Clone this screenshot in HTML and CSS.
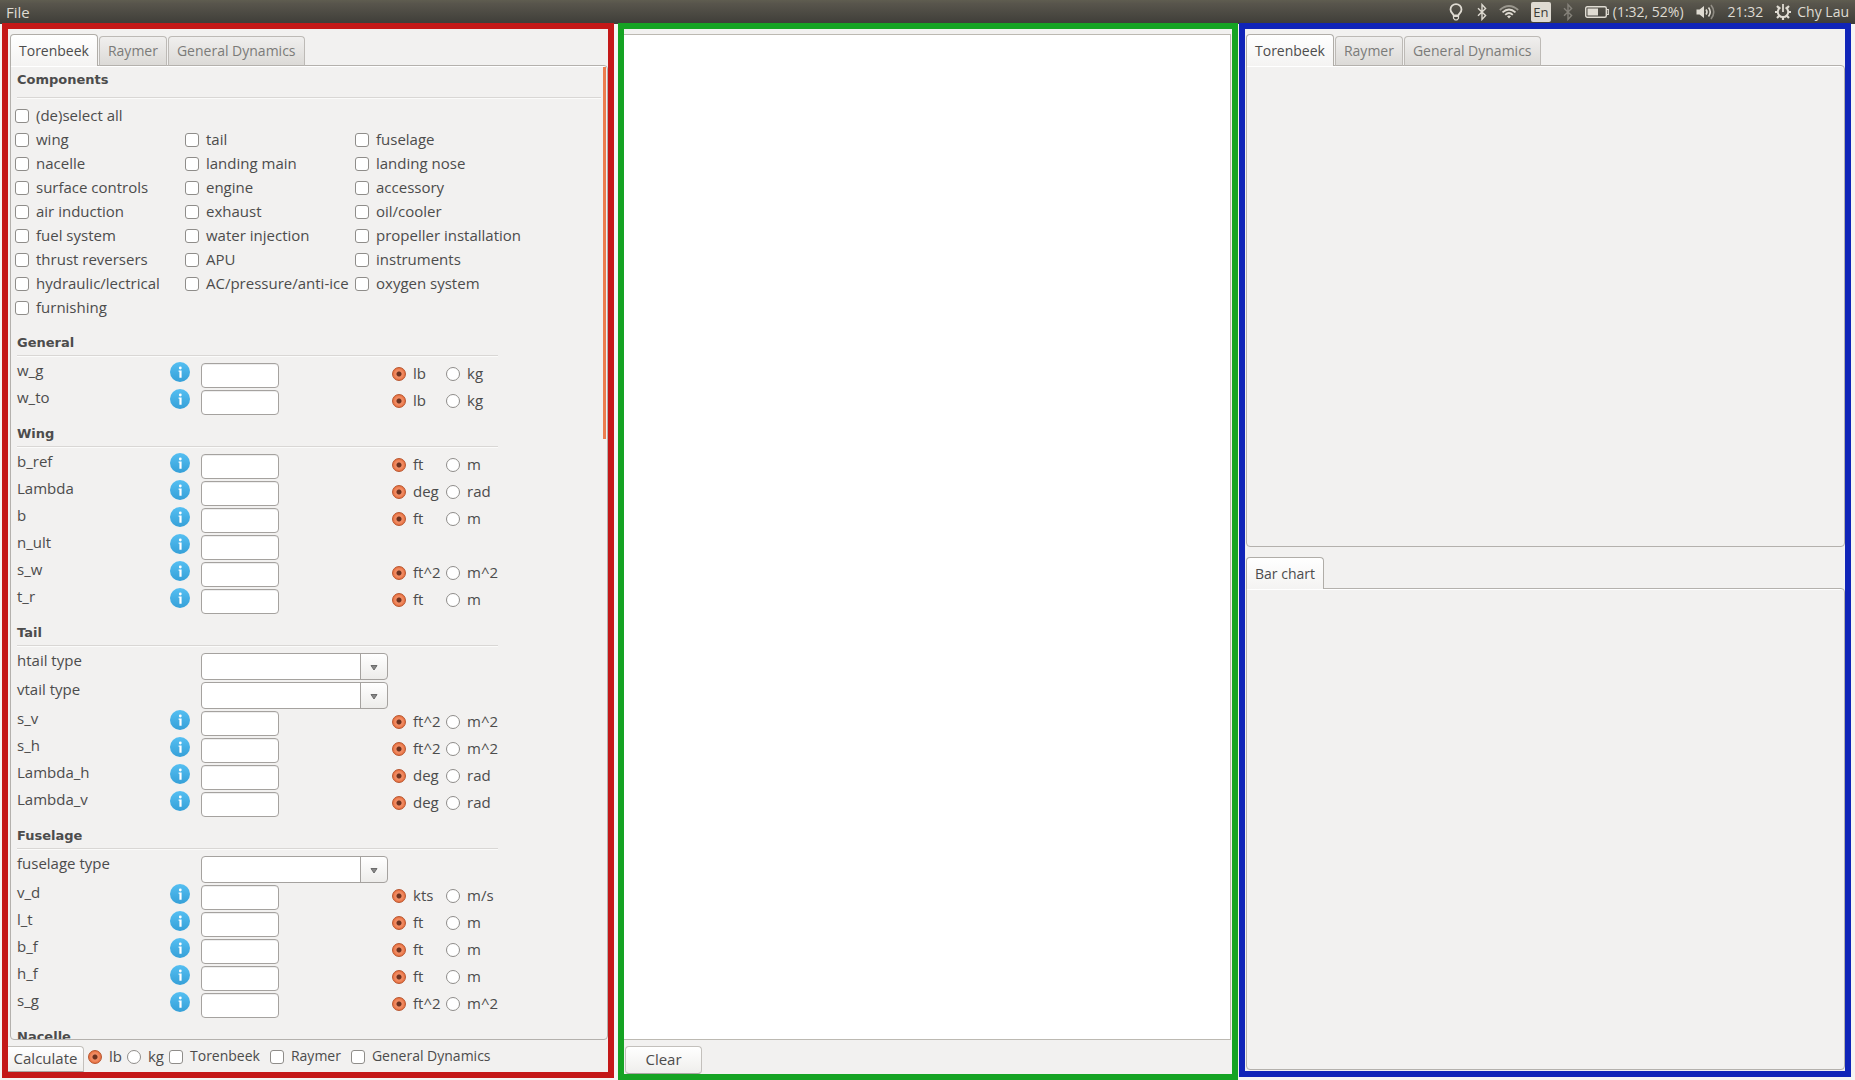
FILE: index.html
```html
<!DOCTYPE html>
<html lang="en">
<head>
<meta charset="utf-8">
<title>Weight estimation</title>
<link rel="stylesheet" href="styles.css">
</head>
<body>
<svg class="defs" aria-hidden="true">
  <defs>
    <linearGradient id="blue" x1="0" y1="0" x2="0" y2="1"><stop offset="0" stop-color="#55bff2"/><stop offset="1" stop-color="#36a0d8"/></linearGradient>
    <symbol id="info" viewBox="0 0 20 20"><circle cx="10" cy="10" r="10" fill="url(#blue)"/><circle cx="10.3" cy="6" r="1.4" fill="#fff"/><path d="M8.600 8.600h3v7.200H9.400V9.800h-.8z" fill="#fff"/></symbol>
    <symbol id="bt" viewBox="0 0 10 18"><path d="M1 5.2l7.600 7.400L5 16.400V1.600l3.600 3.800L1 12.800" fill="none" stroke="currentColor" stroke-width="1.400"/></symbol>
    <symbol id="arrow" viewBox="0 0 8 6"><path d="M1 .5h6L4 5z" fill="#888" stroke="#6b6b6b"/></symbol>
  </defs>
</svg>

<header class="menubar">
  <button class="menu" type="button">File</button>
  <div class="tray">
    <svg class="bulb" viewBox="0 0 14 18"><path d="M4.600 12.400C4.200 10.600 1.500 9.400 1.500 6.400a5.500 5.300 0 0 1 11 0c0 3-2.700 4.200-3.100 6z" fill="none" stroke="currentColor" stroke-width="1.800"/><path d="M4.500 13.500h5v1.800L8 16.800H6l-1.500-1.500z" fill="none" stroke="currentColor" stroke-width="1.200"/></svg>
    <svg class="bt"><use href="#bt"/></svg>
    <svg class="wifi" viewBox="0 0 20 14" fill="none" stroke="currentColor" stroke-width="1.800"><path d="M.8 5Q10-3 19.200 5" opacity=".5"/><path d="M3.500 7.400Q10 1.600 16.500 7.400"/><path d="M6.200 9.800Q10 6.200 13.800 9.800"/><path d="M8 11.200q2-1.400 4 0L10 13.500z" fill="currentColor" stroke="none"/></svg>
    <span class="lang">En</span>
    <svg class="bt dim"><use href="#bt"/></svg>
    <svg class="battery" viewBox="0 0 24 12"><rect x=".7" y=".7" width="20.600" height="10.600" rx="1.500" fill="none" stroke="currentColor" stroke-width="1.400"/><path d="M22 3.500h1.300v5H22" fill="none" stroke="currentColor" stroke-width="1.200"/><path d="M2.500 2.500H13v7H2.500z" fill="currentColor"/></svg>
    <span class="charge">(1:32, 52%)</span>
    <svg class="sound" viewBox="0 0 20 16" fill="none" stroke="currentColor" stroke-width="1.600"><path d="M.5 5.500h3L8 2v12l-4.500-3.500h-3z" fill="currentColor" stroke="none"/><path d="M10 5.500q2 2.500 0 5M12.500 3.500q3.500 4.500 0 9"/><path d="M15 1q5.500 7 0 14" opacity=".45"/></svg>
    <time class="clock">21:32</time>
    <svg class="gear" viewBox="0 0 16 16" fill="none" stroke="currentColor"><path d="M5.400 3.400a5.200 5.200 0 1 0 5.200 0" stroke-width="2"/><path d="M8 0v8" stroke-width="1.800"/><path d="M2 2l2.200 2.200M14 2l-2.200 2.200M0 8h3M13 8h3M2 14l2.200-2.200M14 14l-2.200-2.200M8 13v3" stroke-width="2.200"/></svg>
    <span>Chy Lau</span>
  </div>
</header>

<main class="panels">
  <section class="panel input-panel">
    <div class="tabs" role="tablist">
      <button class="tab active" type="button" role="tab">Torenbeek</button>
      <button class="tab" type="button" role="tab">Raymer</button>
      <button class="tab" type="button" role="tab">General Dynamics</button>
    </div>
    <div class="page">
      <div class="scroll">
        <h2 class="title first">Components</h2>
        <div class="checks">
          <label class="check all"><input type="checkbox">(de)select all</label>
          <label class="check"><input type="checkbox">wing</label>
          <label class="check"><input type="checkbox">tail</label>
          <label class="check"><input type="checkbox">fuselage</label>
          <label class="check"><input type="checkbox">nacelle</label>
          <label class="check"><input type="checkbox">landing main</label>
          <label class="check"><input type="checkbox">landing nose</label>
          <label class="check"><input type="checkbox">surface controls</label>
          <label class="check"><input type="checkbox">engine</label>
          <label class="check"><input type="checkbox">accessory</label>
          <label class="check"><input type="checkbox">air induction</label>
          <label class="check"><input type="checkbox">exhaust</label>
          <label class="check"><input type="checkbox">oil/cooler</label>
          <label class="check"><input type="checkbox">fuel system</label>
          <label class="check"><input type="checkbox">water injection</label>
          <label class="check"><input type="checkbox">propeller installation</label>
          <label class="check"><input type="checkbox">thrust reversers</label>
          <label class="check"><input type="checkbox">APU</label>
          <label class="check"><input type="checkbox">instruments</label>
          <label class="check"><input type="checkbox">hydraulic/lectrical</label>
          <label class="check"><input type="checkbox">AC/pressure/anti-ice</label>
          <label class="check"><input type="checkbox">oxygen system</label>
          <label class="check"><input type="checkbox">furnishing</label>
        </div>

        <h2 class="title">General</h2>
        <div class="fields">
          <div class="row"><label for="w_g">w_g</label><button class="info" type="button"><svg><use href="#info"/></svg></button><input class="text" id="w_g" type="text"><label class="radio"><input type="radio" name="u_w_g" checked>lb</label><label class="radio"><input type="radio" name="u_w_g">kg</label></div>
          <div class="row"><label for="w_to">w_to</label><button class="info" type="button"><svg><use href="#info"/></svg></button><input class="text" id="w_to" type="text"><label class="radio"><input type="radio" name="u_w_to" checked>lb</label><label class="radio"><input type="radio" name="u_w_to">kg</label></div>
        </div>

        <h2 class="title">Wing</h2>
        <div class="fields">
          <div class="row"><label for="b_ref">b_ref</label><button class="info" type="button"><svg><use href="#info"/></svg></button><input class="text" id="b_ref" type="text"><label class="radio"><input type="radio" name="u_b_ref" checked>ft</label><label class="radio"><input type="radio" name="u_b_ref">m</label></div>
          <div class="row"><label for="lambda">Lambda</label><button class="info" type="button"><svg><use href="#info"/></svg></button><input class="text" id="lambda" type="text"><label class="radio"><input type="radio" name="u_lambda" checked>deg</label><label class="radio"><input type="radio" name="u_lambda">rad</label></div>
          <div class="row"><label for="b">b</label><button class="info" type="button"><svg><use href="#info"/></svg></button><input class="text" id="b" type="text"><label class="radio"><input type="radio" name="u_b" checked>ft</label><label class="radio"><input type="radio" name="u_b">m</label></div>
          <div class="row"><label for="n_ult">n_ult</label><button class="info" type="button"><svg><use href="#info"/></svg></button><input class="text" id="n_ult" type="text"></div>
          <div class="row"><label for="s_w">s_w</label><button class="info" type="button"><svg><use href="#info"/></svg></button><input class="text" id="s_w" type="text"><label class="radio"><input type="radio" name="u_s_w" checked>ft^2</label><label class="radio"><input type="radio" name="u_s_w">m^2</label></div>
          <div class="row"><label for="t_r">t_r</label><button class="info" type="button"><svg><use href="#info"/></svg></button><input class="text" id="t_r" type="text"><label class="radio"><input type="radio" name="u_t_r" checked>ft</label><label class="radio"><input type="radio" name="u_t_r">m</label></div>
        </div>

        <h2 class="title">Tail</h2>
        <div class="fields">
          <div class="row pick"><label for="htail">htail type</label><span class="combo"><select id="htail"><option></option></select><svg><use href="#arrow"/></svg></span></div>
          <div class="row pick"><label for="vtail">vtail type</label><span class="combo"><select id="vtail"><option></option></select><svg><use href="#arrow"/></svg></span></div>
          <div class="row"><label for="s_v">s_v</label><button class="info" type="button"><svg><use href="#info"/></svg></button><input class="text" id="s_v" type="text"><label class="radio"><input type="radio" name="u_s_v" checked>ft^2</label><label class="radio"><input type="radio" name="u_s_v">m^2</label></div>
          <div class="row"><label for="s_h">s_h</label><button class="info" type="button"><svg><use href="#info"/></svg></button><input class="text" id="s_h" type="text"><label class="radio"><input type="radio" name="u_s_h" checked>ft^2</label><label class="radio"><input type="radio" name="u_s_h">m^2</label></div>
          <div class="row"><label for="lambda_h">Lambda_h</label><button class="info" type="button"><svg><use href="#info"/></svg></button><input class="text" id="lambda_h" type="text"><label class="radio"><input type="radio" name="u_lambda_h" checked>deg</label><label class="radio"><input type="radio" name="u_lambda_h">rad</label></div>
          <div class="row"><label for="lambda_v">Lambda_v</label><button class="info" type="button"><svg><use href="#info"/></svg></button><input class="text" id="lambda_v" type="text"><label class="radio"><input type="radio" name="u_lambda_v" checked>deg</label><label class="radio"><input type="radio" name="u_lambda_v">rad</label></div>
        </div>

        <h2 class="title">Fuselage</h2>
        <div class="fields">
          <div class="row pick"><label for="fuse">fuselage type</label><span class="combo"><select id="fuse"><option></option></select><svg><use href="#arrow"/></svg></span></div>
          <div class="row"><label for="v_d">v_d</label><button class="info" type="button"><svg><use href="#info"/></svg></button><input class="text" id="v_d" type="text"><label class="radio"><input type="radio" name="u_v_d" checked>kts</label><label class="radio"><input type="radio" name="u_v_d">m/s</label></div>
          <div class="row"><label for="l_t">l_t</label><button class="info" type="button"><svg><use href="#info"/></svg></button><input class="text" id="l_t" type="text"><label class="radio"><input type="radio" name="u_l_t" checked>ft</label><label class="radio"><input type="radio" name="u_l_t">m</label></div>
          <div class="row"><label for="b_f">b_f</label><button class="info" type="button"><svg><use href="#info"/></svg></button><input class="text" id="b_f" type="text"><label class="radio"><input type="radio" name="u_b_f" checked>ft</label><label class="radio"><input type="radio" name="u_b_f">m</label></div>
          <div class="row"><label for="h_f">h_f</label><button class="info" type="button"><svg><use href="#info"/></svg></button><input class="text" id="h_f" type="text"><label class="radio"><input type="radio" name="u_h_f" checked>ft</label><label class="radio"><input type="radio" name="u_h_f">m</label></div>
          <div class="row"><label for="s_g">s_g</label><button class="info" type="button"><svg><use href="#info"/></svg></button><input class="text" id="s_g" type="text"><label class="radio"><input type="radio" name="u_s_g" checked>ft^2</label><label class="radio"><input type="radio" name="u_s_g">m^2</label></div>
        </div>

        <h2 class="title">Nacelle</h2>
      </div>
      <div class="thumb"></div>
    </div>
    <div class="actions">
      <button class="push flush" type="button">Calculate</button>
      <label class="radio"><input type="radio" name="unit" checked>lb</label>
      <label class="radio"><input type="radio" name="unit">kg</label>
      <label class="check"><input type="checkbox">Torenbeek</label>
      <label class="check"><input type="checkbox">Raymer</label>
      <label class="check"><input type="checkbox">General Dynamics</label>
    </div>
  </section>

  <section class="panel log-panel">
    <textarea class="log" aria-label="Output"></textarea>
    <div class="actions">
      <button class="push wide" type="button">Clear</button>
    </div>
  </section>

  <section class="panel chart-panel">
    <div class="tabs" role="tablist">
      <button class="tab active" type="button" role="tab">Torenbeek</button>
      <button class="tab" type="button" role="tab">Raymer</button>
      <button class="tab" type="button" role="tab">General Dynamics</button>
    </div>
    <div class="page"></div>
    <div class="tabs second" role="tablist">
      <button class="tab active" type="button" role="tab">Bar chart</button>
    </div>
    <div class="page"></div>
  </section>
</main>
</body>
</html>
```
FILE: styles.css
```css
* { box-sizing: border-box; }

body {
  margin: 0;
  height: 100vh;
  display: flex;
  flex-direction: column;
  overflow: hidden;
  background: #f5f4f3;
  color: #4c4c4c;
  font: 15px/18px "Open Sans", "Noto Sans", sans-serif;
}

button, input, select, textarea { font: inherit; color: inherit; margin: 0; }

.defs { position: absolute; width: 0; height: 0; }

/* Menu bar */
.menubar {
  flex: none;
  height: 24px;
  padding: 0 6px;
  display: flex;
  align-items: center;
  justify-content: space-between;
  background: linear-gradient(#5f5d50, #58554c 15%, #3e3d38);
  color: #dfdbd2;
}
.menu { border: 0; padding: 0 0 1px; background: none; }
.tray { display: flex; align-items: center; font-size: 14px; }
.tray svg { color: #dfdbd2; }
.tray .bulb { width: 14px; height: 18px; margin-right: 14px; }
.tray .bt { width: 10px; height: 18px; margin-right: 12px; }
.tray .dim { color: #85827a; }
.wifi { width: 20px; height: 14px; margin-right: 12px; }
.lang {
  width: 20px;
  height: 20px;
  margin-right: 12px;
  border-radius: 2px;
  background: #dfdbd2;
  color: #3c3b37;
  font-size: 13px;
  line-height: 20px;
  text-align: center;
}
.battery { width: 24px; height: 12px; margin-right: 4px; }
.charge { margin-right: 12px; }
.sound { width: 20px; height: 16px; margin-right: 12px; }
.clock { margin-right: 12px; }
.gear { width: 16px; height: 16px; margin-right: 6px; }

/* Three framed columns */
.panels {
  flex: 1;
  min-height: 0;
  margin-top: -1px;
  padding: 0 4px 0 2px;
  display: grid;
  grid-template-columns: 616fr 621fr 612fr;
  grid-template-rows: minmax(0, 1fr);
}
.panel {
  min-width: 0;
  display: flex;
  flex-direction: column;
  border: 6px solid;
  background: #f2f1f0;
}
.input-panel { border-color: #c41818; margin: 0 4px 2px 0; }
.log-panel { border-color: #15a323; margin-right: 1px; }
.chart-panel { border-color: #1024b8; margin-bottom: 3px; padding: 0 0 1px 1px; }

/* Tabs */
.tabs {
  position: relative;
  z-index: 1;
  display: flex;
  align-items: flex-end;
  gap: 1px;
  margin-bottom: -1px;
  padding-top: 5px;
}
.input-panel > .tabs { padding-left: 2px; }
.second { padding-top: 10px; }
.tab {
  height: 30px;
  padding: 0 8px;
  border: 1px solid #bdbab6;
  border-bottom-color: #b4b1ad;
  border-radius: 4px 4px 0 0;
  background: linear-gradient(#f0efee, #dcdad7);
  color: #7b7b79;
  font-size: 14px;
}
.tab.active {
  height: 32px;
  border-color: #b0ada8;
  border-bottom: 0;
  background: linear-gradient(#fff, #f4f3f2);
  color: #4c4c4c;
}
.page {
  position: relative;
  flex: 1;
  min-height: 0;
  border: 1px solid #b4b1ad;
  border-radius: 0 4px 4px 4px;
  box-shadow: inset 0 1px #fff;
}
.input-panel > .page { margin: 0 0 0 2px; }
.scroll {
  height: 100%;
  padding-left: 4px;
  overflow-y: auto;
  scrollbar-width: none;
}
.thumb {
  position: absolute;
  top: 1px;
  right: 1px;
  width: 3px;
  height: 38.2%;
  background: #ec7d4f;
}

/* Form */
.title {
  width: 481px;
  margin: 8px 0 0 2px;
  padding-bottom: 2px;
  border-bottom: 1px solid #d9d7d5;
  box-shadow: 0 1px #fbfbfa;
  font: bold 13px/20px "DejaVu Sans", sans-serif;
}
.title.first { width: auto; margin: 0 6px 0 2px; padding-bottom: 3px; line-height: 28px; }
.checks {
  display: grid;
  grid-template-columns: repeat(3, 170px);
  grid-auto-rows: 24px;
  padding: 6px 0 5px;
}
.check, .radio {
  display: flex;
  align-items: center;
  gap: 7px;
  padding-bottom: 2px;
  white-space: nowrap;
}
.check.all { grid-column: 1 / -1; }

input[type="checkbox"], input[type="radio"] {
  appearance: none;
  flex: none;
  width: 14px;
  height: 14px;
  margin-top: 2px;
  border: 1px solid #8f8d8a;
  border-radius: 3px;
  background: #fff;
}
input[type="radio"] { border-radius: 50%; }
input[type="radio"]:checked {
  border-color: #b8552e;
  background: radial-gradient(circle, #6b3220 0 2px, #f08a61 3px 4px, #e8703f 6px);
}

.fields { padding: 6px 0 0 2px; }
.row {
  display: grid;
  grid-template-columns: 153px 31px 191px 54px auto;
  justify-content: start;
  align-items: start;
  height: 27px;
  line-height: 16px;
}
.row .radio { height: 24px; }
.info { width: 20px; height: 20px; padding: 0; border: 0; background: none; }
.info svg { display: block; width: 20px; height: 20px; }
.text {
  width: 78px;
  height: 25px;
  margin-top: 1px;
  padding: 0 4px;
  border: 1px solid #a5a29f;
  border-radius: 4px;
  background: #fff;
  box-shadow: inset 0 1px #eee;
}
.row.pick { grid-template-columns: 184px 187px; height: 29px; }
.combo { position: relative; height: 27px; margin-top: 1px; }
.combo select {
  appearance: none;
  display: block;
  width: 100%;
  height: 27px;
  border: 1px solid #a5a29f;
  border-radius: 4px;
  background: linear-gradient(90deg, #fff 158px, #a5a29f 158px 159px, transparent 159px), linear-gradient(#fff, #edecea);
}
.combo svg { position: absolute; right: 10px; top: 12px; width: 8px; height: 6px; pointer-events: none; }

/* Bottom bars */
.actions { flex: none; display: flex; align-items: flex-start; height: 32px; padding-top: 6px; }
.actions .radio, .actions .check { height: 22px; margin-right: 5px; }
.actions .check { margin-right: 10px; font-size: 14px; }
.push {
  height: 26px;
  padding: 0 0 2px;
  border: 1px solid #c3c0bc;
  border-bottom-color: #a9a6a2;
  border-radius: 4px;
  background: linear-gradient(#fff, #efeeec);
}
.flush { width: 76px; margin-right: 4px; border-left: 0; border-radius: 0 4px 0 0; }
.wide { width: 77px; height: 28px; margin-left: 1px; }

.log {
  flex: 1;
  display: block;
  margin: 5px 1px 0 0;
  border: 1px solid #bcb9b2;
  border-left: 0;
  background: #fff;
  resize: none;
}
.log-panel .actions { height: 34px; }
```
